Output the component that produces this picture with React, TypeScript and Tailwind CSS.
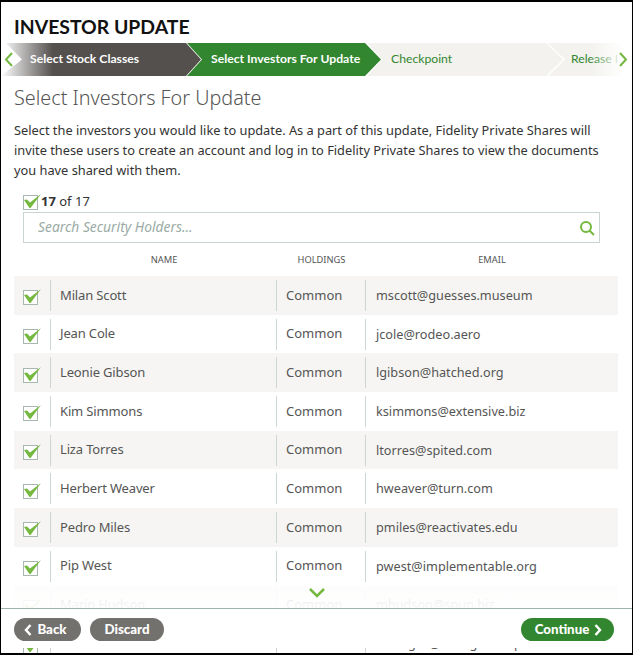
const holders = [
  ["Milan Scott", "mscott@guesses.museum"],
  ["Jean Cole", "jcole@rodeo.aero"],
  ["Leonie Gibson", "lgibson@hatched.org"],
  ["Kim Simmons", "ksimmons@extensive.biz"],
  ["Liza Torres", "ltorres@spited.com"],
  ["Herbert Weaver", "hweaver@turn.com"],
  ["Pedro Miles", "pmiles@reactivates.edu"],
  ["Pip West", "pwest@implementable.org"],
  ["Mario Hudson", "mhudson@spun.biz"],
  ["Nina Stone", "nbridges@dialogues.top"],
];

const CheckBox = () => (
  <svg width="20" height="16" viewBox="0 0 20 16" className="block shrink-0">
    <rect x="0.5" y="1.5" width="14" height="14" fill="#fff" stroke="#a8b8b0" />
    <path d="M1 6 L4 5.5 L7 8.5 L18 0 L7.5 14 L6.5 14 Z" fill="#74b83f" />
  </svg>
);

const Arrow = ({ d, className }: { d: string; className: string }) => (
  <svg width="9" height="15" viewBox="0 0 9 15" fill="none" stroke="#74b83f" strokeWidth="2" className={className}>
    <path d={d} />
  </svg>
);

const App = () => {
  return (
    <div className="relative h-[655px] w-[633px] overflow-hidden border-t-2 border-r border-b-2 border-l border-black bg-white font-['Noto_Sans',sans-serif] text-[#444]">
      <h1 className="ml-[13px] mt-[13px] font-['Lato',sans-serif] text-[19.4px] font-bold leading-[24px] text-[#111]">
        INVESTOR UPDATE
      </h1>

      {/* steps */}
      <div className="relative mt-[4px] flex h-[33px] font-['Lato',sans-serif] text-[12.2px] font-bold">
        <div className="flex w-[200px] shrink-0 items-center bg-[linear-gradient(90deg,#fff_0px,#53504e_52px)] pl-[29px] text-white [clip-path:polygon(0_0,185px_0,100%_50%,185px_100%,0_100%,21px_50%,5px_0)]">
          Select Stock Classes
        </div>
        <div className="-ml-[14px] flex w-[194px] shrink-0 items-center bg-[#32862f] pl-[24px] text-white [clip-path:polygon(0_0,178px_0,100%_50%,178px_100%,0_100%,15px_50%)]">
          Select Investors For Update
        </div>
        <div className="-ml-[14px] flex w-[196px] shrink-0 items-center bg-[#f3f2ee] pl-[24px] font-normal text-[#32862f] [clip-path:polygon(0_0,179px_0,100%_50%,179px_100%,0_100%,15px_50%)]">
          Checkpoint
        </div>
        <div className="-ml-[15px] flex w-[85px] shrink-0 items-center whitespace-nowrap bg-[#f3f2ee] pl-[23px] font-normal text-[#32862f] [clip-path:polygon(0_0,100%_0,100%_100%,0_100%,17px_50%)]">
          Release I
        </div>
        <div className="absolute right-0 top-0 h-full w-[42px] bg-[linear-gradient(90deg,rgba(255,255,255,0),#fff_80%)]" />
        <Arrow d="M8 1 L2 7.5 L8 14" className="absolute left-[3px] top-[9px]" />
        <Arrow d="M1 1 L7 7.5 L1 14" className="absolute right-[4px] top-[9px]" />
      </div>

      <div className="px-[13px]">
        <h2 className="mt-[9px] text-[19.8px] font-light leading-[26px] text-[#555]">Select Investors For Update</h2>
        <p className="mt-[9px] text-[12.8px] leading-[20px] text-[#333]">
          Select the investors you would like to update. As a part of this update, Fidelity Private Shares will invite these users to create an account and log in to Fidelity Private Shares to view the documents you have shared with them.
        </p>

        <div className="ml-[9px] mt-[13px] flex h-[18px] items-center text-[13px] text-[#333]">
          <CheckBox />
          <span className="-ml-[2px]">
            <b>17</b> of 17
          </span>
        </div>
        <div className="ml-[9px] mt-[1px] flex h-[31px] w-[577px] items-center justify-between border border-[#c9d5d0] pl-[14px] pr-[3px]">
          <span className="text-[13.85px] italic text-[#9aaba5]">Search Security Holders...</span>
          <svg width="16" height="16" viewBox="0 0 16 16" className="mr-[1px]" fill="none" stroke="#74b83f" strokeWidth="2">
            <circle cx="7" cy="7" r="5" />
            <path d="M10.5 10.5 L15 15" />
          </svg>
        </div>

        <div className="mt-[10px] grid h-[13px] w-[604px] grid-cols-[37px_226px_89px_252px] items-center text-center text-[9.3px] text-[#555]">
          <span />
          <span>NAME</span>
          <span>HOLDINGS</span>
          <span>EMAIL</span>
        </div>

        <div className="mt-[10px] w-[604px]">
          {holders.map(([name, email], i) => (
            <div
              key={email}
              className={`grid h-[38.7px] grid-cols-[36px_226px_89px_253px] items-center text-[#555] ${i % 2 === 0 ? "bg-[#f6f5f3]" : "bg-white"}`}
            >
              <div className="flex justify-center pl-[1px] pt-[4px]">
                <CheckBox />
              </div>
              <div className="flex h-[31px] items-center border-l border-[#ccd6d2] pl-[9px] text-[13px] tracking-[-0.15px]">{name}</div>
              <div className="flex h-[31px] items-center border-l border-[#ccd6d2] pl-[9px] text-[13px]">Common</div>
              <div className="flex h-[31px] items-center border-l border-[#ccd6d2] pl-[10px] text-[12.7px]">{email}</div>
            </div>
          ))}
        </div>
      </div>

      {/* fade over the list */}
      <div className="absolute bottom-[45px] left-0 right-0 h-[24px] bg-[linear-gradient(180deg,rgba(255,255,255,0.8),rgba(255,255,255,0.95))]" />
      <svg width="18" height="12" viewBox="0 0 18 12" className="absolute bottom-[54px] left-[307px]" fill="none" stroke="#74b83f" strokeWidth="2.5">
        <path d="M2 2 L9 9 L16 2" />
      </svg>

      {/* footer */}
      <div className="absolute bottom-[5px] left-0 right-0 flex h-[40px] items-start justify-between border-t border-[#9db5ab] bg-white px-[13px] pt-[9px] font-['Lato',sans-serif] text-[13.3px] font-black text-white">
        <div className="flex gap-[9px]">
          <button className="flex h-[23px] w-[67px] items-center justify-center rounded-full bg-[#73716e] pr-[4px]">
            <svg width="8" height="12" viewBox="0 0 8 12" fill="none" stroke="#fff" strokeWidth="2.5">
              <path d="M6.5 1 L2 6 L6.5 11" />
            </svg>
            <span className="ml-[5px]">Back</span>
          </button>
          <button className="flex h-[23px] w-[74px] items-center justify-center rounded-full bg-[#73716e]">Discard</button>
        </div>
        <button className="mr-[5px] flex h-[23px] w-[93px] items-center justify-center rounded-full bg-[#32862f] pl-[2px]">
          <span>Continue</span>
          <svg width="8" height="12" viewBox="0 0 8 12" fill="none" stroke="#fff" strokeWidth="2.5" className="ml-[5px]">
            <path d="M1.5 1 L6 6 L1.5 11" />
          </svg>
        </button>
      </div>
    </div>
  );
};

export default App;
